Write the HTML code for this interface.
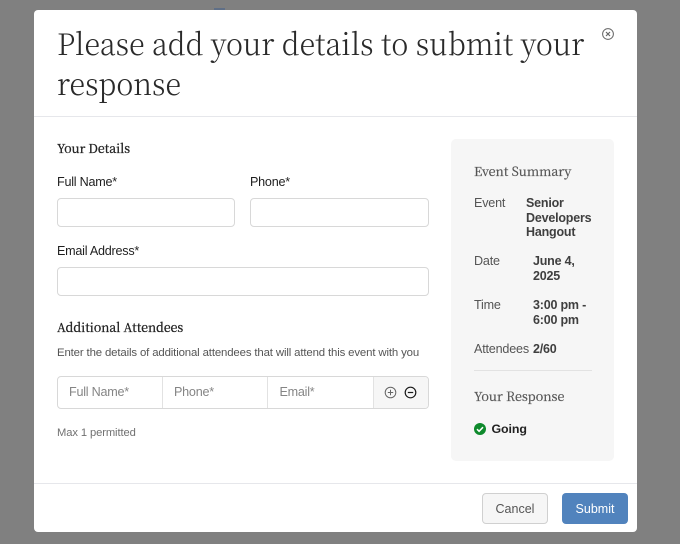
<!DOCTYPE html>
<html>
<head>
<meta charset="utf-8">
<style>
html,body{margin:0;padding:0;width:680px;height:544px;overflow:hidden;background:#808080;}
*{box-sizing:border-box;}
.abs,.t{position:absolute;}
.t{white-space:nowrap;font-family:"Liberation Sans",Arial,sans-serif;color:#1f1f1f;}
.s{font-family:"Noto Serif CJK SC","Liberation Serif",serif;transform-origin:0 0;}
#modal{position:absolute;left:34px;top:10px;width:603px;height:522px;background:#fff;border-radius:4px;}
.inp{position:absolute;background:#fff;border:1px solid #d8d8d8;border-radius:4px;}
.lb{font-size:12.6px;letter-spacing:-.24px;line-height:15px;}
.ph{font-size:12.6px;letter-spacing:-.24px;line-height:15px;color:#858585;}
.sl{font-size:12.6px;letter-spacing:-.2px;color:#555;}
.sv{font-size:12.5px;letter-spacing:-.2px;font-weight:700;color:#3f3f3f;line-height:14.5px;}
.h{font-size:12.5px;line-height:20px;color:#222;-webkit-text-stroke:.35px #222;transform:scaleX(.987);}
.h2{font-size:12.6px;line-height:19px;color:#555;-webkit-text-stroke:.25px #555;}
</style>
</head>
<body>
<div class="abs" style="left:214px;top:8px;width:11px;height:2px;background:#5f6f87"></div>
<div id="modal"></div>
<div class="t s" style="left:57px;top:23px;font-size:30px;font-weight:300;line-height:39.5px;color:#2a2a2a;transform:scaleX(.956);">Please add your details to submit your<br>response</div>
<svg class="abs" style="left:601px;top:27px" width="14" height="14" viewBox="0 0 14 14" fill="none" stroke="#666" stroke-width="1"><circle cx="7" cy="7" r="5.4"/><path d="M5 5l4 4M9 5l-4 4" stroke-width="1.2"/></svg>
<div class="abs" style="left:34px;top:116px;width:603px;height:1px;background:#e6e7eb"></div>

<div class="t s h" style="left:57px;top:138px;">Your Details</div>
<div class="t lb" style="left:57px;top:175px;">Full Name*</div>
<div class="t lb" style="left:250px;top:175px;">Phone*</div>
<div class="inp" style="left:57px;top:198px;width:178px;height:29px"></div>
<div class="inp" style="left:250px;top:198px;width:179px;height:29px"></div>
<div class="t lb" style="left:57px;top:244px;">Email Address*</div>
<div class="inp" style="left:57px;top:267px;width:372px;height:29px"></div>

<div class="t s h" style="left:57px;top:317px;">Additional Attendees</div>
<div class="t" style="left:57px;top:346px;font-size:11.4px;letter-spacing:-.14px;line-height:14px;color:#555;">Enter the details of additional attendees that will attend this event with you</div>

<div class="inp" style="left:57px;top:376px;width:372px;height:33px;overflow:hidden">
  <div class="abs" style="left:315px;top:0;width:56px;height:31px;background:#f6f6f6;border-left:1px solid #e2e2e2"></div>
  <div class="abs" style="left:104px;top:0;width:1px;height:31px;background:#e2e2e2"></div>
  <div class="abs" style="left:209px;top:0;width:1px;height:31px;background:#e2e2e2"></div>
</div>
<div class="t ph" style="left:69px;top:385px;">Full Name*</div>
<div class="t ph" style="left:174px;top:385px;">Phone*</div>
<div class="t ph" style="left:279.500px;top:385px;">Email*</div>
<svg class="abs" style="left:384px;top:386px" width="13" height="13" viewBox="0 0 13 13" fill="none" stroke="#666" stroke-width="1"><circle cx="6.500" cy="6.500" r="5.300"/><path d="M3.800 6.500h5.400M6.500 3.800v5.400"/></svg>
<svg class="abs" style="left:404px;top:386px" width="13" height="13" viewBox="0 0 13 13" fill="none" stroke="#1a1a1a" stroke-width="1.200"><circle cx="6.500" cy="6.500" r="5.300"/><path d="M3.800 6.500h5.400"/></svg>
<div class="t" style="left:57px;top:426px;font-size:11.2px;letter-spacing:-.1px;line-height:14px;color:#707070;">Max 1 permitted</div>

<div class="abs" style="left:451px;top:139px;width:163px;height:322px;background:#f6f6f6;border-radius:5px"></div>
<div class="t s h2" style="left:474px;top:161px;">Event Summary</div>
<div class="t sl" style="left:474px;top:196px;line-height:14.5px">Event</div>
<div class="t sv" style="left:526px;top:196px;">Senior<br>Developers<br>Hangout</div>
<div class="t sl" style="left:474px;top:254px;line-height:14.5px">Date</div>
<div class="t sv" style="left:533px;top:254px;">June 4,<br>2025</div>
<div class="t sl" style="left:474px;top:298px;line-height:14.500px">Time</div>
<div class="t sv" style="left:533px;top:298px;">3:00 pm -<br>6:00 pm</div>
<div class="t sl" style="left:474px;top:341.500px;line-height:14.500px">Attendees</div>
<div class="t sv" style="left:533px;top:341.500px;">2/60</div>
<div class="abs" style="left:474px;top:370px;width:118px;height:1px;background:#e2e2e2"></div>
<div class="t s h2" style="left:474px;top:385.500px;">Your Response</div>
<svg class="abs" style="left:474px;top:423px" width="12" height="12" viewBox="0 0 12 12"><circle cx="6" cy="6" r="6" fill="#0e8a2c"/><path d="M3 6.200l2.100 2.100L9 4.200" fill="none" stroke="#fff" stroke-width="1.500"/></svg>
<div class="t" style="left:491.500px;top:422px;font-size:12.4px;letter-spacing:-.1px;font-weight:700;line-height:15px;color:#222;">Going</div>

<div class="abs" style="left:34px;top:483px;width:603px;height:1px;background:#e6e7eb"></div>
<div class="abs" style="left:482px;top:492.500px;width:66px;height:31.500px;background:#f6f6f6;border:1px solid #d0d0d0;border-radius:4px;font:12.5px/30px 'Liberation Sans',sans-serif;color:#555;text-align:center">Cancel</div>
<div class="abs" style="left:562px;top:492.500px;width:66px;height:31.500px;background:#5183bd;border-radius:4px;font:12.5px/32px 'Liberation Sans',sans-serif;color:#fff;text-align:center">Submit</div>
</body>
</html>
